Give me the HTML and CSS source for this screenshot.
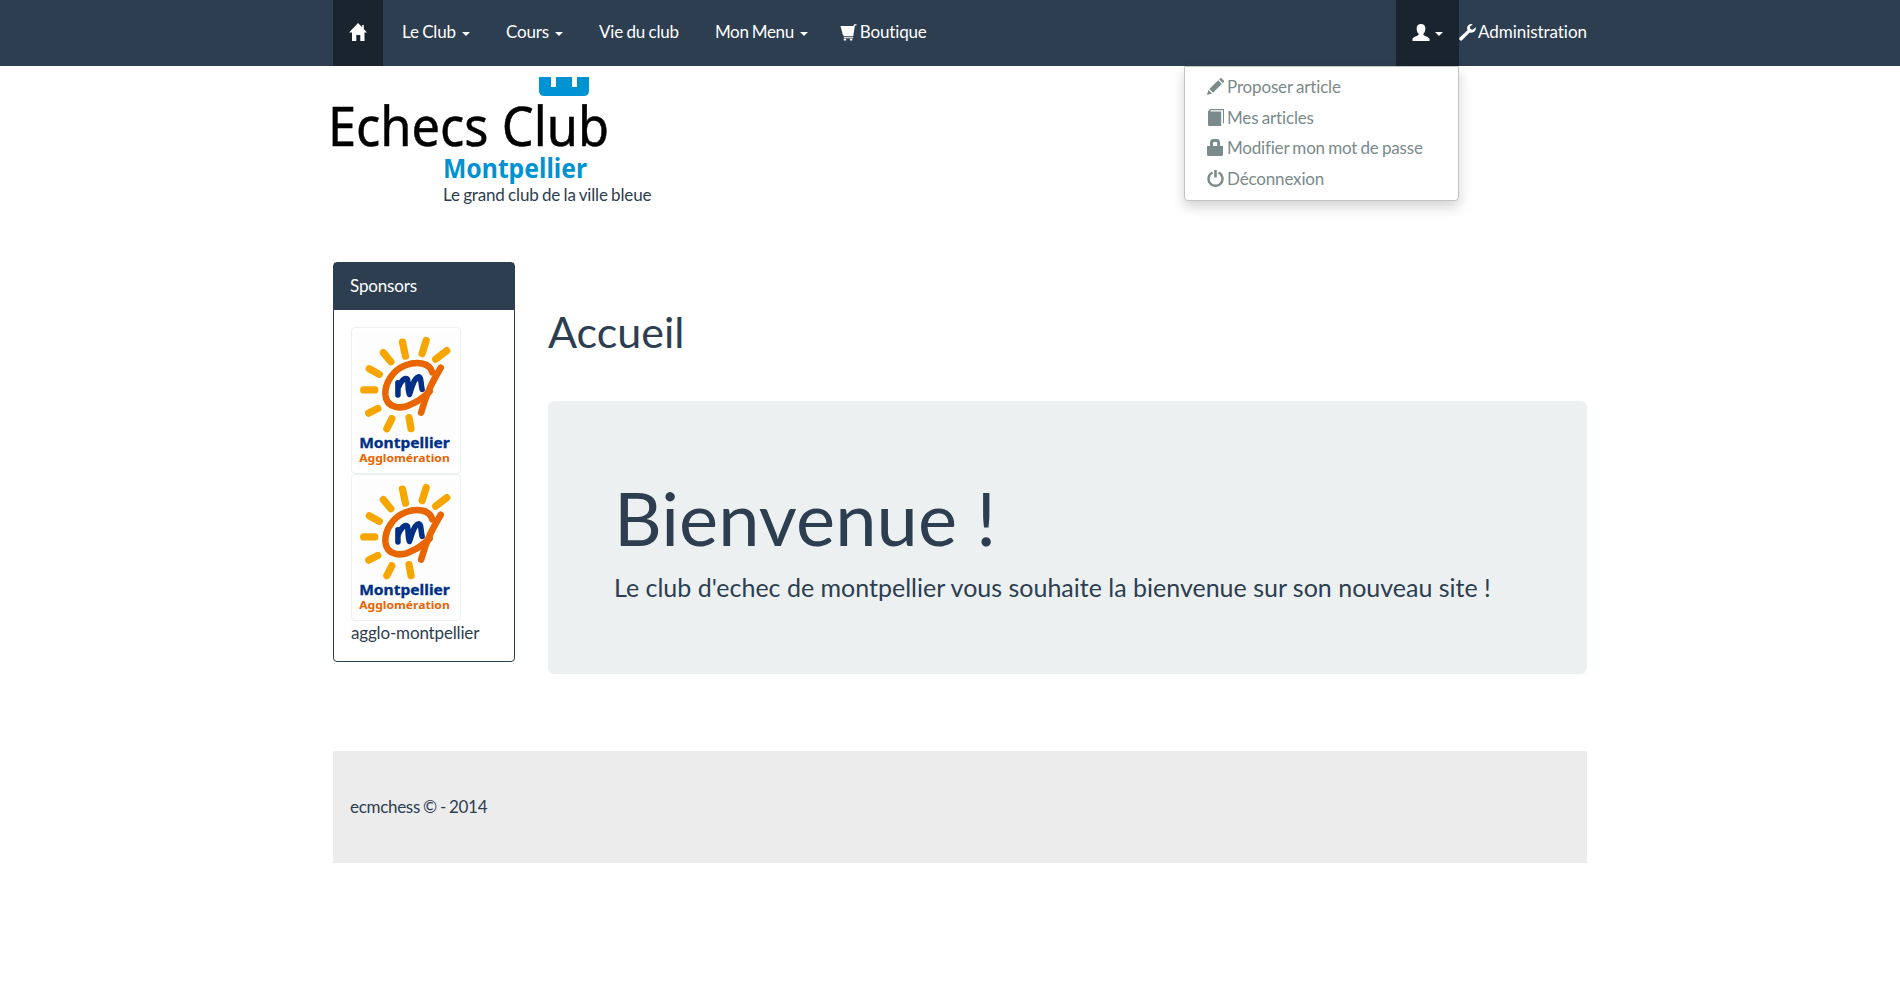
FILE: index.html
```html
<!DOCTYPE html>
<html lang="fr">
<head>
<meta charset="utf-8">
<title>Echecs Club Montpellier</title>
<link rel="stylesheet" href="styles.css">
</head>
<body>
<svg class="defs" width="0" height="0" aria-hidden="true">
  <symbol id="sun" viewBox="0 0 99 136">
    <rect width="99" height="136" fill="#fdfdfd"/>
    <g fill="none" stroke="#f7a600" stroke-width="7.200" stroke-linecap="round">
      <path d="M46 10l3 14M69.500 8.500l-4 13M90 18.500l-11 8.500M27 20.500l7.500 9M13 36.500l10 5.500M7.500 57.500h11M12.500 80.500l9-4.500M35.500 86l-5 10M52.500 85l2 11"/>
    </g>
    <g fill="none" stroke="#e96500" stroke-width="6.500" stroke-linecap="round" stroke-linejoin="round">
      <path d="M75.500 40C73 30 60 29 49 33C36 38 28.500 51 29 62C30 76 45 77 54 72C62 69 68 64 73 59"/>
      <path d="M84 35.500C76 49 70 60 64.500 80"/>
    </g>
    <path d="M41.500 50.500V62.500M41.500 56C44 49 49 44 51 47C52 51 51 58 53 62C55 56 57 46 62 44.500C65 45 64 51 65.500 57" fill="none" stroke="#002f87" stroke-width="5.500" stroke-linecap="round" stroke-linejoin="round"/>
    <text class="sun-city" x="3" y="115.500" textLength="90" lengthAdjust="spacingAndGlyphs">Montpellier</text>
    <text class="sun-area" x="3" y="129" textLength="90" lengthAdjust="spacingAndGlyphs">Agglomération</text>
  </symbol>
</svg>

<header class="navbar">
  <div class="container nav-row">
    <a class="nav-item home active"><svg class="icon" viewBox="0 0 18 18"><path d="M9 0 0 9.500h3V18h4.300v-6h4v6h4.200V9.500H18L14.800 6V2h-1.600v2.300z"/></svg></a>
    <a class="nav-item">Le Club<b class="caret"></b></a>
    <a class="nav-item">Cours<b class="caret"></b></a>
    <a class="nav-item">Vie du club</a>
    <a class="nav-item menu">Mon Menu<b class="caret"></b></a>
    <a class="nav-item shop"><svg class="icon" viewBox="0 0 17 18"><path d="M0 2h13.600L14.500.3H17v1.200h-1.700L13.500 13H3.200v-1.300l-.8-.7zM3.500 14h10v1H3.500zM3.500 15.500h2.500v2H3.500zM10 15.500h2.500v2H10z"/></svg>Boutique</a>
    <div class="nav-right">
      <div class="user-menu">
        <a class="nav-item user active"><svg class="icon" viewBox="0 0 18 18"><path d="M9 0c3 0 4.800 2 4.600 5.200-.1 2.500-1.100 4-2.100 5v1.300c0 .8 6.500 2.500 6.500 4.500v2H0v-2c0-2 6.500-3.700 6.500-4.500v-1.300c-1-1-2-2.500-2.100-5C4.200 2 6 0 9 0z"/></svg><b class="caret"></b></a>
        <div class="dropdown">
          <a><svg class="icon" viewBox="0 0 17 17"><path d="M0 17l1.400-5L5 15.600zM2.300 11 11.200 2.300l3.600 3.600L6 14.700zM12.200 1.300 13.200.3q.8-.6 1.600.2l2 2q.6.800 0 1.400l-1.100 1z"/></svg>Proposer article</a>
          <a><svg class="icon" viewBox="0 0 17 17"><path d="M1 2.200 3.300 0H17v13.500L16 15V1.200H4L3 2.400h11.200V17H2.300Q1 17 1 15.800z"/></svg>Mes articles</a>
          <a class="password"><svg class="icon" viewBox="0 0 17 17"><path fill-rule="evenodd" d="M0 7h3V3.500Q3.200 0 6 0h4q2.800 0 3 3.500V7h3v8.500q0 1.500-1.500 1.500h-13Q0 17 0 15.500zM6 7h4.200V4q0-1-1-1H7Q6 3 6 4z"/></svg>Modifier mon mot de passe</a>
          <a><svg class="icon" viewBox="0 0 17 17"><path d="M5.500 2.500a7 7 0 1 0 6 0" fill="none" stroke="currentColor" stroke-width="2.400"/><path d="M7.200 0h2.600v7.500H7.200z"/></svg>Déconnexion</a>
        </div>
      </div>
      <a class="nav-item admin"><svg class="icon" viewBox="0 0 18 18"><path d="M17.700 3.500 14.500 6.200 12 5.300 11.500 3 14.500.2C11.500-.6 8.500 1.500 8.600 4.300q0 1.200.4 2.200L.7 14.300Q-.5 15.700.8 17t2.700 0L11.300 9c3.500 1.300 7.300-1.700 6.400-5.500z"/></svg>Administration</a>
    </div>
  </div>
</header>

<div class="container">
  <div class="brand">
    <svg class="logo" width="276" height="110" viewBox="0 0 276 110">
      <path d="M206 1h12v10h5V1h16v10h5V1h12v15q-1 4-5 4h-40q-4 0-5-4z" fill="#0093d3"/>
      <text class="logo-name" x="-5" y="70" textLength="281" lengthAdjust="spacingAndGlyphs">Echecs Club</text>
      <text class="logo-city" x="110" y="102" textLength="144" lengthAdjust="spacingAndGlyphs">Montpellier</text>
    </svg>
    <p class="tagline">Le grand club de la ville bleue</p>
  </div>

  <div class="columns">
    <aside class="panel">
      <div class="panel-heading">Sponsors</div>
      <div class="panel-body">
        <svg class="thumb" viewBox="0 0 99 136"><use href="#sun"/></svg>
        <svg class="thumb" viewBox="0 0 99 136"><use href="#sun"/></svg>
        <span class="sponsor">agglo-montpellier</span>
      </div>
    </aside>
    <main class="content">
      <h1 class="title">Accueil</h1>
      <section class="jumbotron">
        <h2>Bienvenue !</h2>
        <p>Le club d'echec de montpellier vous souhaite la bienvenue sur son nouveau site !</p>
      </section>
    </main>
  </div>

  <footer class="footer">ecmchess © - 2014</footer>
</div>
</body>
</html>
```

FILE: styles.css
```css
* { box-sizing: border-box; }
body {
  margin: 0;
  background: #fff;
  color: #2c3e50;
  font: 17px/23.5px Lato, sans-serif;
  letter-spacing: -.16px;
  word-spacing: -.8px;
}
.defs { display: none; }
.container { width: 1254px; margin: 0 0 0 333px; }
.icon { width: 17px; height: 17px; fill: currentColor; flex: none; }

.navbar { height: 66px; background: #2c3e50; }
.nav-row { display: flex; }
.nav-item {
  display: flex;
  align-items: center;
  height: 66px;
  padding: 0 18px 2px;
  color: #fff;
  white-space: nowrap;
}
.nav-item.active { background: #1a242f; }
.home { width: 50px; padding-left: 16px; margin-right: 1px; }
.home .icon { width: 18px; height: 18px; }
.caret {
  margin: 4px 0 0 6px;
  border: 4px solid transparent;
  border-top-color: currentColor;
  border-bottom: 0;
}
.menu { letter-spacing: -.35px; }
.shop { padding-left: 14px; }
.shop .icon { margin-right: 3px; }
.nav-right { display: flex; margin-left: auto; }
.user { width: 63px; padding-left: 16px; }
.user .icon { width: 18px; }
.user .caret { margin-left: 5px; }
.admin { width: 128px; padding-left: 0; padding-right: 0; letter-spacing: -.05px; }
.admin .icon { margin-right: 2px; }

.user-menu { position: relative; }
.dropdown {
  position: absolute;
  top: 66px;
  right: 0;
  width: 275px;
  height: 135px;
  padding: 4.500px 0;
  background: #fff;
  border: 1px solid #c4c4c4;
  border-radius: 0 0 4px 4px;
  box-shadow: 0 6px 13px rgba(0, 0, 0, .175);
}
.dropdown a {
  display: flex;
  align-items: center;
  height: 30.600px;
  padding: 0 22px;
  color: #7b8a8b;
}
.dropdown .icon { margin-right: 3px; }
.dropdown .password { letter-spacing: -.2px; }

.brand { height: 195px; padding-top: 10px; }
.logo { display: block; overflow: visible; letter-spacing: 0; word-spacing: 0; }
.logo-name { font: 55px "Noto Sans", sans-serif; fill: #000; stroke: #000; stroke-width: .5px; }
.logo-city { font: bold 27px "Noto Sans", sans-serif; fill: #0093d3; }
.tagline { margin: -3px 0 0 110px; }

.columns { display: flex; gap: 33px; align-items: flex-start; }
.panel {
  width: 182px;
  height: 400px;
  margin-top: 1px;
  border: 1px solid #2c3e50;
  border-radius: 4px;
}
.panel-heading {
  height: 47px;
  padding: 11px 16px;
  background: #2c3e50;
  color: #fff;
}
.panel-body { padding: 17px; }
.thumb {
  display: block;
  width: 110px;
  height: 147px;
  padding: 4px;
  border: 1px solid #ecf0f1;
  border-radius: 4px;
}
.sponsor { display: block; }
.sun-city, .sun-area { letter-spacing: 0; }
.sun-city { font: bold 13.500px "Noto Sans", sans-serif; fill: #002f87; stroke: #002f87; stroke-width: .3px; }
.sun-area { font: bold 11px "Noto Sans", sans-serif; fill: #e96500; }

.content { flex: 1; }
.title { margin: 47px 0 0; height: 93px; font-size: 43px; line-height: 47px; font-weight: 400; letter-spacing: 0; }
.jumbotron {
  height: 273px;
  padding: 76px 66px 0;
  background: #ecf0f1;
  border-radius: 6px;
  letter-spacing: 0;
  word-spacing: 0;
}
.jumbotron h2 { margin: 0; font-size: 74px; line-height: 82px; font-weight: 400; letter-spacing: .1px; }
.jumbotron p { margin: 10px 0 0; font-size: 25px; line-height: 36px; }

.footer { height: 112px; margin-top: 77px; padding: 44px 17px; background: #ececec; letter-spacing: -.3px; word-spacing: -1px; }
```
